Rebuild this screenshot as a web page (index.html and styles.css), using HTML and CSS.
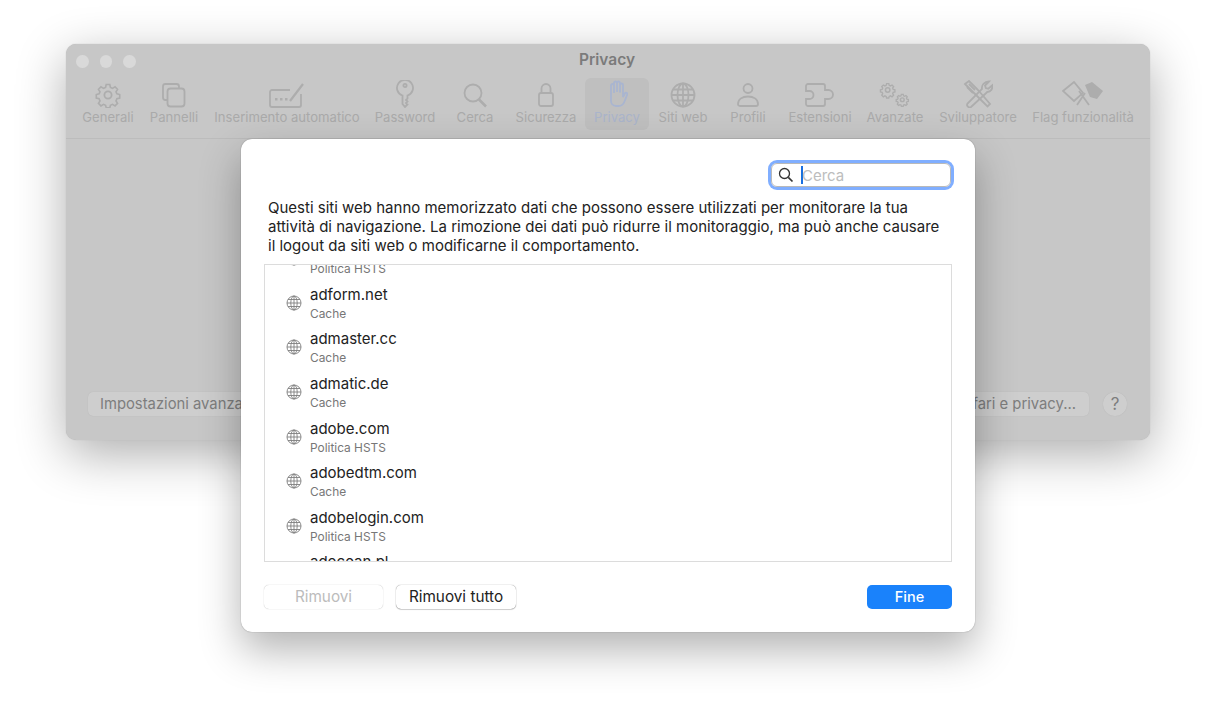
FILE: index.html
```html
<!DOCTYPE html>
<html lang="it">
<head>
    <meta charset="UTF-8">
    <title>Privacy</title>
    <link rel="stylesheet" href="styles.css">
</head>
<body>
    <div class="stage">
        <!-- finestra dietro -->
        <div class="window">
            <div class="titlebar">
                <div class="lights"><span></span><span></span><span></span></div>
                <div class="title">Privacy</div>
            </div>
            <div class="toolbar">
                <div class="tool" style="width:66px">
                    <svg width="28" height="26" viewBox="0 0 28 26"><circle cx="14" cy="13" r="3.600"/><path d="M12 1.500h4l.7 3.200 2.300 1 2.800-1.700 2.800 2.800-1.700 2.800 1 2.300 3.100.7v4l-3.100.7-1 2.300 1.700 2.800-2.800 2.800-2.800-1.700-2.300 1-.7 2.800h-4l-.7-2.800-2.300-1-2.800 1.700-2.800-2.800 1.700-2.800-1-2.300-3.100-.7v-4l3.100-.7 1-2.300-1.700-2.800 2.800-2.800 2.800 1.700 2.300-1z" transform="translate(1.400 1.200) scale(.9)"/></svg>
                    <span>Generali</span>
                </div>
                <div class="tool" style="width:66px">
                    <svg width="28" height="26" viewBox="0 0 28 26"><path d="M7 18H5.500a2.500 2.500 0 0 1-2.500-2.500V4.500A2.500 2.500 0 0 1 5.500 2h11A2.500 2.500 0 0 1 19 4.500V6"/><rect x="7.500" y="6.500" width="17" height="18" rx="3"/></svg>
                    <span>Pannelli</span>
                </div>
                <div class="tool" style="width:160px">
                    <svg width="36" height="26" viewBox="0 0 36 26"><path d="M21 8H3a2 2 0 0 0-2 2v13a2 2 0 0 0 2 2h27a2 2 0 0 0 2-2V12"/><path d="M21 19L34 2" stroke-width="2.200"/><path class="fill" d="M6 16h2.500v2.500H6zM11 16h2.500v2.500H11zM16 16h2.500v2.500H16z"/></svg>
                    <span>Inserimento automatico</span>
                </div>
                <div class="tool" style="width:76px">
                    <svg width="20" height="28" viewBox="0 0 20 28"><circle cx="10" cy="5.500" r="1.600"/><path d="M7.500 15.500V24l2.500 3 2.500-2.500-1.500-1.500 1.500-1.500-1.500-1.500 1.500-1.500v-3a8 8 0 1 0-5 0z"/></svg>
                    <span>Password</span>
                </div>
                <div class="tool" style="width:64px">
                    <svg width="26" height="26" viewBox="0 0 26 26"><circle cx="11" cy="11" r="8.500"/><path d="M17 17.500L24 24.500" stroke-width="2.600"/></svg>
                    <span>Cerca</span>
                </div>
                <div class="tool" style="width:78px">
                    <svg width="20" height="26" viewBox="0 0 20 26"><rect x="3" y="11" width="14" height="13" rx="2"/><path d="M5.500 11V6.500a4.500 4.500 0 0 1 9 0V11"/></svg>
                    <span>Sicurezza</span>
                </div>
                <div class="tool tool-on" style="width:64px">
                    <svg width="22" height="28" viewBox="0 0 22 28"><path d="M5 15V5.500a1.500 1.500 0 0 1 3 0V13M8 12V3a1.500 1.500 0 0 1 3 0v9M11 12V3a1.500 1.500 0 0 1 3 0v9M14 12.500V5a1.500 1.500 0 0 1 3 0v12l1.800-3.500c.8-1.400 3-.6 2.400 1l-2.700 7c-1 2.800-3.200 4.500-6 4.500H10c-3 0-5-2.300-5-5.200V15"/></svg>
                    <span>Privacy</span>
                </div>
                <div class="tool" style="width:68px">
                    <svg width="26" height="26" viewBox="0 0 26 26"><circle cx="13" cy="13" r="11.500"/><ellipse cx="13" cy="13" rx="5.500" ry="11.500"/><path d="M13 1.500v23M1.500 13h23M3.200 7.500h19.600M3.200 18.500h19.600"/></svg>
                    <span>Siti web</span>
                </div>
                <div class="tool" style="width:62px">
                    <svg width="24" height="26" viewBox="0 0 24 26"><circle cx="12" cy="6.500" r="4.500"/><path d="M2 22c0-5 4.500-7.500 10-7.500S22 17 22 22c0 1.300-.7 2-2 2H4c-1.300 0-2-.7-2-2z"/></svg>
                    <span>Profili</span>
                </div>
                <div class="tool" style="width:82px">
                    <svg width="30" height="26" viewBox="0 0 30 26"><path d="M3 2h15a2 2 0 0 1 2 2v4h3.500a3.500 3.500 0 0 1 0 9H20v5a2 2 0 0 1-2 2H3a2 2 0 0 1-2-2v-5h3.500a3.500 3.500 0 0 0 0-8H1V4a2 2 0 0 1 2-2z"/></svg>
                    <span>Estensioni</span>
                </div>
                <div class="tool" style="width:68px">
                    <svg width="32" height="26" viewBox="0 0 32 26"><g transform="scale(.62)" stroke-width="2.400"><circle cx="14" cy="13" r="3.600"/><path d="M12 1.500h4l.7 3.200 2.300 1 2.800-1.700 2.800 2.800-1.700 2.800 1 2.300 3.100.7v4l-3.100.7-1 2.300 1.700 2.800-2.800 2.800-2.800-1.700-2.300 1-.7 2.800h-4l-.7-2.800-2.300-1-2.800 1.700-2.800-2.800 1.700-2.800-1-2.300-3.100-.7v-4l3.100-.7 1-2.300-1.700-2.800 2.800-2.800 2.800 1.700 2.300-1z" transform="translate(1.400 1.200) scale(.9)"/></g><g transform="translate(16 11) scale(.52)" stroke-width="2.800"><circle cx="14" cy="13" r="3.600"/><path d="M12 1.500h4l.7 3.200 2.300 1 2.800-1.700 2.800 2.800-1.700 2.800 1 2.300 3.100.7v4l-3.100.7-1 2.300 1.700 2.800-2.800 2.800-2.800-1.700-2.300 1-.7 2.800h-4l-.7-2.800-2.300-1-2.800 1.700-2.800-2.800 1.700-2.800-1-2.300-3.100-.7v-4l3.100-.7 1-2.300-1.700-2.800 2.800-2.800 2.800 1.700 2.300-1z" transform="translate(1.400 1.200) scale(.9)"/></g></svg>
                    <span>Avanzate</span>
                </div>
                <div class="tool" style="width:98px">
                    <svg width="30" height="28" viewBox="0 0 30 28"><path d="M2 4l4-3 7 7 2.500 2.500L27 24l-2.500 2.500L11 13 8.500 10.500z"/><path d="M6 4l6 6M4 7l6 6"/><path d="M26 1.500l-4 4 .8 2.500 2.500.8 4-3.500c.6 3.400-1.500 6.500-5 6.700L8 27c-2 1.300-5-1.200-3.500-3.500L19 9c-.8-4 2.500-7.500 7-7.500z"/></svg>
                    <span>Sviluppatore</span>
                </div>
                <div class="tool" style="width:112px">
                    <svg width="42" height="28" viewBox="0 0 42 28"><path d="M1 11l11-9 9 11-9 8z"/><path d="M15 25l8-12M27 25l-10-14"/><path class="fill" d="M23 5l7-3 11 9-6 8-7-2z"/></svg>
                    <span>Flag funzionalità</span>
                </div>
            </div>
            <div class="panel">
                <div class="panel-foot">
                    <div class="btn-back">Impostazioni avanzate...</div>
                    <div class="btn-back">Informazioni su Safari e privacy...</div>
                    <div class="help">?</div>
                </div>
            </div>
        </div>

        <!-- foglio davanti -->
        <div class="sheet">
            <div class="sheet-top">
                <div class="search">
                    <svg width="16" height="16" viewBox="0 0 16 16"><circle cx="6.500" cy="6.500" r="5"/><path d="M10.300 10.300L14.500 14.500" stroke-width="1.700"/></svg>
                    <i class="caret"></i>
                    <span>Cerca</span>
                </div>
            </div>
            <p class="desc">Questi siti web hanno memorizzato dati che possono essere utilizzati per monitorare la tua<br>attività di navigazione. La rimozione dei dati può ridurre il monitoraggio, ma può anche causare<br>il logout da siti web o modificarne il comportamento.</p>
            <div class="list">
                <div class="rows" id="rows"></div>
            </div>
            <div class="sheet-foot">
                <div class="btn btn-off">Rimuovi</div>
                <div class="btn btn-all">Rimuovi tutto</div>
                <div class="btn btn-done">Fine</div>
            </div>
        </div>
    </div>

    <script>
        var data = [
            ['&nbsp;', 'Politica HSTS'],
            ['adform.net', 'Cache'],
            ['admaster.cc', 'Cache'],
            ['admatic.de', 'Cache'],
            ['adobe.com', 'Politica HSTS'],
            ['adobedtm.com', 'Cache'],
            ['adobelogin.com', 'Politica HSTS'],
            ['adocean.pl', 'Cache']
        ];
        var globe = '<svg class="globe" width="16" height="16" viewBox="0 0 16 16"><circle cx="8" cy="8" r="7"/><ellipse cx="8" cy="8" rx="3.200" ry="7"/><path d="M8 1v14M1 8h14M2 4.500h12M2 11.500h12"/></svg>';
        var rows = document.querySelector('#rows');
        var html = '';
        for(var i = 0; i < data.length; i++){
            html += '<div class="row">' + globe + '<div><div class="site">' + data[i][0] + '</div><div class="kind">' + data[i][1] + '</div></div></div>';
        }
        rows.innerHTML = html;
    </script>
</body>
</html>
```

FILE: styles.css
```css
*{
    box-sizing: border-box;
}
body{
    margin: 0;
    background-color: #fff;
    font-family: Inter, "Liberation Sans", sans-serif;
}
.stage{
    position: relative;
    width: 1216px;
    height: 719px;
    overflow: hidden;
}

/* finestra dietro */
.window{
    position: absolute;
    left: 66px;
    top: 44px;
    width: 1084px;
    height: 396px;
    display: flex;
    flex-direction: column;
    background-color: #c7c7c7;
    border-radius: 10px;
    box-shadow: 0 0 1px #aaa, 0 14px 50px rgba(0, 0, 0, .32);
}
.titlebar{
    position: relative;
    height: 30px;
    flex: none;
}
.lights{
    position: absolute;
    left: 10px;
    top: 11px;
    display: flex;
    gap: 11px;
}
.lights span{
    width: 12.500px;
    height: 13px;
    border-radius: 50%;
    background-color: #d9d9d9;
}
.title{
    padding-top: 7px;
    padding-right: 2px;
    text-align: center;
    font-size: 15.500px;
    font-weight: 600;
    line-height: 18px;
    color: #7b7b7b;
}
.toolbar{
    display: flex;
    height: 65px;
    flex: none;
    padding-left: 9px;
    padding-top: 4px;
    border-bottom: 1px solid #bcbcbc;
}
.tool{
    flex: none;
    height: 52px;
    display: flex;
    flex-direction: column;
    align-items: center;
    justify-content: flex-end;
    padding-bottom: 5px;
    border-radius: 6px;
    font-size: 13.100px;
    line-height: 16px;
    white-space: nowrap;
    color: #aaa;
}
.tool svg{
    fill: none;
    stroke: #adadad;
    stroke-width: 1.800;
    margin-bottom: 1px;
}
.tool svg .fill{
    fill: #adadad;
    stroke: none;
}
.tool-on{
    background-color: #bfbfbf;
    color: #aab4cb;
}
.tool-on svg{
    stroke: #a9b5d0;
}
.panel{
    flex: 1;
    display: flex;
    flex-direction: column;
    justify-content: flex-end;
    padding: 0 23px 24px 22px;
}
.panel-foot{
    display: flex;
    align-items: center;
}
.btn-back{
    height: 24px;
    padding: 0 13px 0 12px;
    border-radius: 5px;
    background-color: #cecece;
    box-shadow: 0 0 1px #b0b0b0;
    font-size: 14.800px;
    line-height: 24px;
    color: #7d7d7d;
    white-space: nowrap;
}
.btn-back:nth-child(2){
    margin-left: auto;
}
.help{
    width: 24px;
    height: 24px;
    margin-left: 14px;
    border-radius: 50%;
    background-color: #cecece;
    box-shadow: 0 0 1px #b0b0b0;
    text-align: center;
    font-size: 17px;
    line-height: 24px;
    color: #7d7d7d;
}

/* foglio */
.sheet{
    position: absolute;
    left: 241px;
    top: 139px;
    width: 734px;
    height: 493px;
    display: flex;
    flex-direction: column;
    padding: 0 23px 0 23px;
    background-color: #fff;
    border-radius: 11px;
    box-shadow: 0 0 1px rgba(0, 0, 0, .5), 0 18px 42px rgba(0, 0, 0, .3);
}
.sheet-top{
    display: flex;
    justify-content: flex-end;
    padding-top: 24px;
    height: 59px;
    flex: none;
}
.search{
    width: 180px;
    height: 24px;
    margin-right: 1px;
    display: flex;
    align-items: center;
    padding-left: 6px;
    border: 1px solid #b9b9b9;
    border-radius: 6px;
    box-shadow: 0 0 0 3px #80aeff;
    font-size: 15px;
    color: #bdbdbd;
}
.search svg{
    flex: none;
    fill: none;
    stroke: #333;
    stroke-width: 1.300;
}
.search span{
    margin-left: -1px;
}
.caret{
    width: 2px;
    height: 18px;
    margin: 0 0 0 7px;
    background-color: #1a6fe0;
}
.desc{
    margin: 0;
    padding-left: 4px;
    flex: none;
    font-size: 15px;
    line-height: 19px;
    white-space: nowrap;
    color: #222;
}
.list{
    height: 298px;
    flex: none;
    width: 688px;
    margin-top: 9px;
    overflow: hidden;
    border: 1px solid #dcdcdc;
}
.rows{
    margin-top: -29px;
}
.row{
    height: 44.600px;
    display: flex;
    align-items: center;
    gap: 8px;
    padding-left: 21px;
}
.globe{
    flex: none;
    fill: none;
    stroke: #7f7f7f;
    stroke-width: .9;
}
.site{
    font-size: 15px;
    line-height: 19px;
    color: #222;
}
.kind{
    margin-top: 2px;
    font-size: 11.900px;
    line-height: 15px;
    color: #777;
}
.sheet-foot{
    display: flex;
    margin-top: 23px;
    gap: 13px;
    width: 688px;
}
.btn{
    height: 24px;
    border-radius: 5px;
    text-align: center;
    font-size: 15.300px;
    line-height: 24px;
}
.btn-off{
    width: 119px;
    color: #bcbcbc;
    box-shadow: 0 0 1px #aaa;
}
.btn-all{
    width: 120px;
    color: #222;
    box-shadow: 0 0 1px rgba(0, 0, 0, .6), 0 1px 1px rgba(0, 0, 0, .15);
}
.btn-done{
    width: 85px;
    margin-left: auto;
    font-size: 14.500px;
    font-weight: 500;
    color: #fff;
    background-color: #1a82fb;
}
```
